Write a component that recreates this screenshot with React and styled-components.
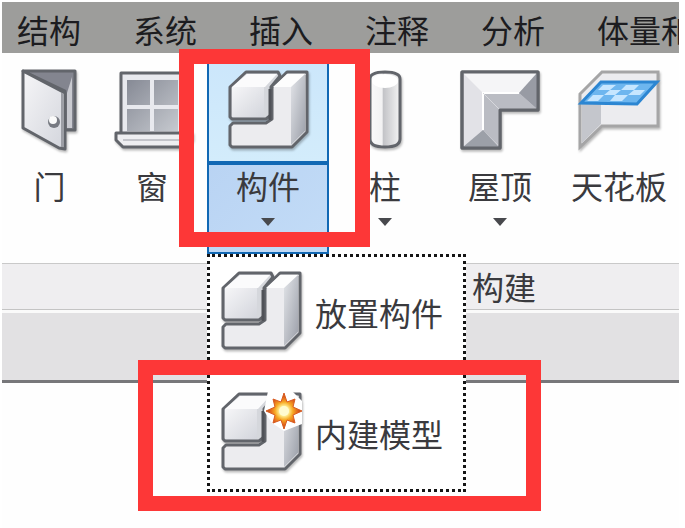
import React from "react";
import styled, { createGlobalStyle, css } from "styled-components";

const RED = "#fd3737";

const GlobalStyle = createGlobalStyle`
  * { box-sizing: border-box; }
  body {
    margin: 0;
    background: #fff;
    color: #3a3a3e;
    font-family: "Noto Sans CJK SC", sans-serif;
    font-size: 32px;
    line-height: 40px;
  }
  button { font: inherit; color: inherit; background: none; border: 0; padding: 0; }
`;

const Page = styled.div`
  display: flex;
  flex-direction: column;
  min-height: 100vh;
  padding: 2px 6px 0 2px;
`;

const TabBar = styled.nav`
  display: flex;
  gap: 52px;
  height: 51px;
  padding: 7px 0 0 15px;
  overflow: hidden;
  background: #9d9d9b;
`;

const Tab = styled.button`
  flex: none;
  height: 40px;
  color: #1c1c20;
  white-space: nowrap;
`;

const Ribbon = styled.section`
  display: grid;
  grid-template-columns: 95fr 110fr 122fr 112fr 118fr 120fr;
  height: 210px;
  background: #fefefe;
`;

const ToolCell = styled.div`
  position: relative;
`;

const ToolButton = styled.button`
  display: flex;
  flex-direction: column;
  width: 100%;
  height: 201px;
  ${(p) =>
    p.$active &&
    css`
      border: 2px solid #1168b4;
      border-top: 0;
      background: linear-gradient(135deg, #b4cff1, #c3dcf7);
    `}
`;

const ToolIcon = styled.span`
  display: flex;
  justify-content: center;
  width: 100%;
  height: 112px;
  padding-top: 16px;
  ${(p) =>
    p.$active &&
    css`
      border-bottom: 4px solid #1168b4;
      background: linear-gradient(#cbe6fb, #d3ecfb);
    `}
`;

const ToolLabel = styled.span`
  display: flex;
  flex-direction: column;
  align-items: center;
  width: 100%;
  white-space: nowrap;
`;

const Arrow = styled.svg`
  display: block;
  width: 14px;
  height: 8px;
  margin-top: 13px;
`;

const Icon = styled.svg`
  display: block;
  flex: none;
  width: 80px;
  height: 84px;
  overflow: visible;
  filter: drop-shadow(1px 2px 1px #0004);
`;

const PanelTitle = styled.div`
  height: 47px;
  padding: 2px 0 0 470px;
  border-top: 1px solid #c9c9c9;
  border-bottom: 1px solid #c4c4c4;
  background: #efeef0;
`;

const OptionsBar = styled.div`
  height: 73px;
  border-top: 3px solid #fafafa;
  border-bottom: 3px solid #77777a;
  background: #e2e1e3;
`;

const Canvas = styled.main`
  flex: 1;
  background: #fefefe;
`;

const Menu = styled.div`
  position: absolute;
  z-index: 2;
  top: 201px;
  left: 0;
  display: grid;
  gap: 38px;
  width: 259px;
  padding: 13px 0 15px 11px;
  border: 3px dotted #151515;
  background: #fff;
`;

const MenuItem = styled.button`
  position: relative;
  display: flex;
  align-items: center;
  gap: 14px;
  height: 83px;
  white-space: nowrap;
`;

const Highlight = styled.span`
  position: absolute;
  z-index: 3;
  border: 15px solid ${RED};
  pointer-events: none;
`;

const ToolHighlight = styled(Highlight)`
  inset: -4px -41px 16px -28px;
`;

const ItemHighlight = styled(Highlight)`
  inset: -31px -78px -37px -83px;
`;

const stroke = { stroke: "#62656b", strokeWidth: 3, strokeLinejoin: "round" };

const Defs = styled.svg`
  position: absolute;
  width: 0;
  height: 0;
`;

function Gradients() {
  return (
    <Defs aria-hidden="true">
      <defs>
        <linearGradient id="face" x1="0" y1="0" x2="1" y2="1">
          <stop offset="0" stopColor="#f6f6f8" />
          <stop offset="1" stopColor="#d3d5dc" />
        </linearGradient>
        <linearGradient id="side" x1="0" y1="0" x2="1" y2="1">
          <stop offset="0" stopColor="#e3e5e9" />
          <stop offset="1" stopColor="#9a9ea8" />
        </linearGradient>
        <linearGradient id="pane" x1="0" y1="0" x2="1" y2="1">
          <stop offset="0" stopColor="#868a95" />
          <stop offset="1" stopColor="#c6c9cf" />
        </linearGradient>
        <linearGradient id="tube">
          <stop offset="0" stopColor="#fafafa" />
          <stop offset="0.4" stopColor="#f2f2f3" />
          <stop offset="0.45" stopColor="#c3c4c8" />
          <stop offset="1" stopColor="#f4f4f4" />
        </linearGradient>
        <radialGradient id="flare">
          <stop offset="0" stopColor="#fff" />
          <stop offset="0.25" stopColor="#fff6a0" />
          <stop offset="0.5" stopColor="#f7a823" />
          <stop offset="0.75" stopColor="#e2661b" />
          <stop offset="1" stopColor="#9c4218" />
        </radialGradient>
      </defs>
    </Defs>
  );
}

function DoorIcon() {
  return (
    <Icon viewBox="0 0 80 84">
      <path d="M13 2H65V61H55V22Z" fill="#83858f" {...stroke} />
      <path d="M57 24L62 8V59H57Z" fill="#c9cad0" />
      <path d="M13 2L55 24V80L49 79L13 59Z" fill="url(#face)" {...stroke} />
      <path d="M52 24V78" stroke="#9c9ea5" strokeWidth="2" />
      <circle cx="44" cy="53" r="6" fill="#777a82" />
      <circle cx="43" cy="51" r="4" fill="#fafafa" />
    </Icon>
  );
}

function WindowIcon() {
  return (
    <Icon viewBox="0 0 80 84">
      <rect x="9" y="4" width="66" height="62" fill="#e8e9ee" {...stroke} />
      <path d="M15 11H38V36H15ZM42 11H66V36H42ZM15 40H38V62H15ZM42 40H66V62H42Z" fill="url(#pane)" />
      <path d="M4 64H80V70L75 78H11L4 71Z" fill="#eeeef1" {...stroke} />
      <path d="M11 71H74" stroke="#c3c4ca" strokeWidth="2" />
    </Icon>
  );
}

function BlockIcon({ spark }) {
  return (
    <Icon viewBox="0 0 80 84">
      <path d="M2 18L18 3H50L52 7L43 18V46L38 50H4L2 48Z" fill="#d5d7dc" {...stroke} />
      <path d="M4 18L19 5H49L37 18Z" fill="#fbfbfc" />
      <path d="M4 18H36V48H4Z" fill="url(#face)" />
      <path d="M44 18L59 3H79V63L64 78H4L2 76V57L5 54H38L44 50Z" fill="#ececef" {...stroke} />
      <path d="M45 18L59 5H78L64 18Z" fill="#fdfdfd" />
      <path d="M63 18L77 5V62L63 76Z" fill="url(#side)" />
      <path d="M42 20V51" stroke="#505258" strokeWidth="3" />
      {spark && (
        <g transform="translate(63 20)">
          <path d="M-16 -20H8L18 -10V13L0 20L-12 12L-20 0Z" fill="#fff" />
          <path
            d="M0 -18L3 -9L11 -12L9 -4L18 0L9 4L11 12L3 9L0 18L-3 9L-11 12L-9 4L-18 0L-9 -4L-11 -12L-3 -9Z"
            fill="url(#flare)"
            stroke="#d95a20"
            strokeWidth="1"
          />
          <circle r="5" fill="#fffbd0" />
        </g>
      )}
    </Icon>
  );
}

function ColumnIcon() {
  return (
    <Icon viewBox="0 0 80 84">
      <path d="M25 10Q25 3 40 3Q55 3 55 10V70Q55 78 40 78Q25 78 25 70Z" fill="url(#tube)" {...stroke} />
      <ellipse cx="40" cy="12" rx="13" ry="7" fill="#fff" />
    </Icon>
  );
}

function RoofIcon() {
  return (
    <Icon viewBox="0 0 80 84">
      <path d="M2 3H78V41H40V79H2Z" fill="#e2e2e7" {...stroke} />
      <path d="M3 4H77L59 24H23Z" fill="#f5f5f7" />
      <path d="M23 24H59L77 40H40V78L23 61Z" fill="#babcc3" />
      <path d="M77 4V40L59 24Z" fill="#989ba4" />
      <path d="M3 78L23 61L39 78Z" fill="#9ca0a8" />
      <path d="M59 24H23V61" fill="none" stroke="#fff" strokeWidth="2" />
      <path d="M23 24L39 40" stroke="#d6d7dc" strokeWidth="1" />
      <path d="M2 3H78V41H40V79H2Z" fill="none" {...stroke} />
    </Icon>
  );
}

function CeilingIcon() {
  return (
    <Icon viewBox="0 0 80 84">
      <path d="M1 25L23 3H79V57H23L1 78Z" fill="#ececef" stroke="#a5a5a6" strokeWidth="3" />
      <path d="M3 34H22V55L3 74Z" fill="#c4c6cc" />
      <path d="M2 34L22 13H78L58 35Z" fill="#6db6ef" stroke="#2c86d2" strokeWidth="3" />
      <path d="M24 16H37L31 21H19ZM47 16H60L55 21H42ZM31 21H42L36 26H25ZM55 21H66L61 26H49ZM14 26H25L19 32H8ZM36 26H49L43 32H31Z" fill="#c6e6ff" />
    </Icon>
  );
}

const tabs = ["结构", "系统", "插入", "注释", "分析", "体量和"];

const tools = [
  { label: "门", icon: <DoorIcon /> },
  { label: "窗", icon: <WindowIcon /> },
  { label: "构件", icon: <BlockIcon />, arrow: true, active: true },
  { label: "柱", icon: <ColumnIcon />, arrow: true },
  { label: "屋顶", icon: <RoofIcon />, arrow: true },
  { label: "天花板", icon: <CeilingIcon /> },
];

function ComponentMenu() {
  return (
    <Menu>
      <MenuItem>
        <BlockIcon />
        放置构件
      </MenuItem>
      <MenuItem>
        <BlockIcon spark />
        内建模型
        <ItemHighlight />
      </MenuItem>
    </Menu>
  );
}

function Tool({ label, icon, arrow, active }) {
  return (
    <ToolCell>
      <ToolButton $active={active}>
        <ToolIcon $active={active}>{icon}</ToolIcon>
        <ToolLabel>
          {label}
          {arrow && (
            <Arrow viewBox="0 0 14 8" aria-hidden="true">
              <path d="M0 0H14L7 8Z" fill="#48494d" />
            </Arrow>
          )}
        </ToolLabel>
      </ToolButton>
      {active && <ComponentMenu />}
      {active && <ToolHighlight />}
    </ToolCell>
  );
}

export default function App() {
  return (
    <Page>
      <GlobalStyle />
      <Gradients />
      <TabBar>
        {tabs.map((name) => (
          <Tab key={name}>{name}</Tab>
        ))}
      </TabBar>
      <Ribbon>
        {tools.map((tool) => (
          <Tool key={tool.label} {...tool} />
        ))}
      </Ribbon>
      <PanelTitle>构建</PanelTitle>
      <OptionsBar />
      <Canvas />
    </Page>
  );
}
